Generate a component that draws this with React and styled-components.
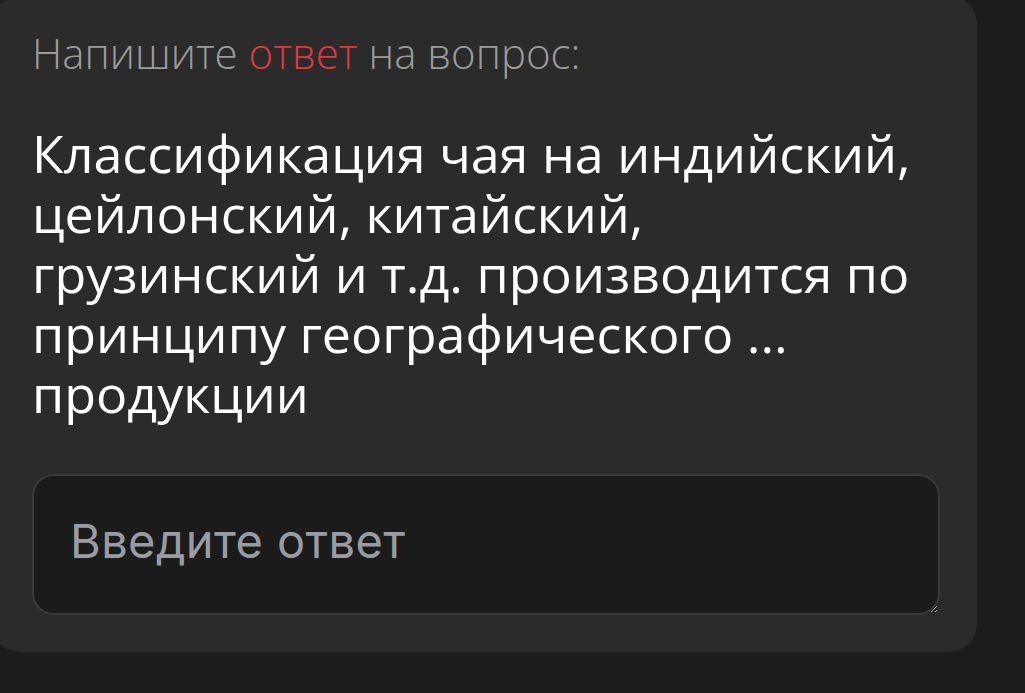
import React from "react";
import styled, { createGlobalStyle } from "styled-components";

const Global = createGlobalStyle`
  html, body {
    margin: 0;
    padding: 0;
    background: #1c1c1c;
    overflow: hidden;
  }
`;

const Page = styled.div`
  width: 1025px;
  height: 693px;
  background: #1c1c1c;
  overflow: hidden;
`;

const Card = styled.div`
  box-sizing: border-box;
  width: 985px;
  margin: -4px 0 0 -8px;
  padding: 33px 37px 37px 40px;
  background: #2b2b2b;
  border-radius: 28px;
`;

const Prompt = styled.div`
  font-family: "Open Sans", Lato, sans-serif;
  font-weight: 300;
  font-size: 42px;
  line-height: 48px;
  color: #9b9b9b;

  span {
    color: #e0393f;
  }
`;

const Question = styled.div`
  margin-top: 46px;
  font-family: "Open Sans", Lato, sans-serif;
  font-weight: 400;
  font-size: 52px;
  line-height: 60px;
  color: #ffffff;
  white-space: nowrap;
`;

const Answer = styled.textarea`
  display: block;
  box-sizing: border-box;
  width: 908px;
  height: 141px;
  margin-top: 51px;
  padding: 39px 36px;
  background: #1b1b1b;
  border: 2px solid #3a3a3a;
  border-radius: 22px;
  color: #ffffff;
  font-family: Inter, "Liberation Sans", sans-serif;
  font-size: 47px;
  letter-spacing: 0.4px;
  line-height: 52px;
  outline: none;
  resize: vertical;

  &::placeholder {
    color: #9a9ca3;
  }
`;

export default function App() {
  return (
    <Page>
      <Global />
      <Card>
        <Prompt>
          Напишите <span>ответ</span> на вопрос:
        </Prompt>
        <Question>
          Классификация чая на индийский,
          <br />
          цейлонский, китайский,
          <br />
          грузинский и т.д. производится по
          <br />
          принципу географического ...
          <br />
          продукции
        </Question>
        <Answer placeholder="Введите ответ" />
      </Card>
    </Page>
  );
}
